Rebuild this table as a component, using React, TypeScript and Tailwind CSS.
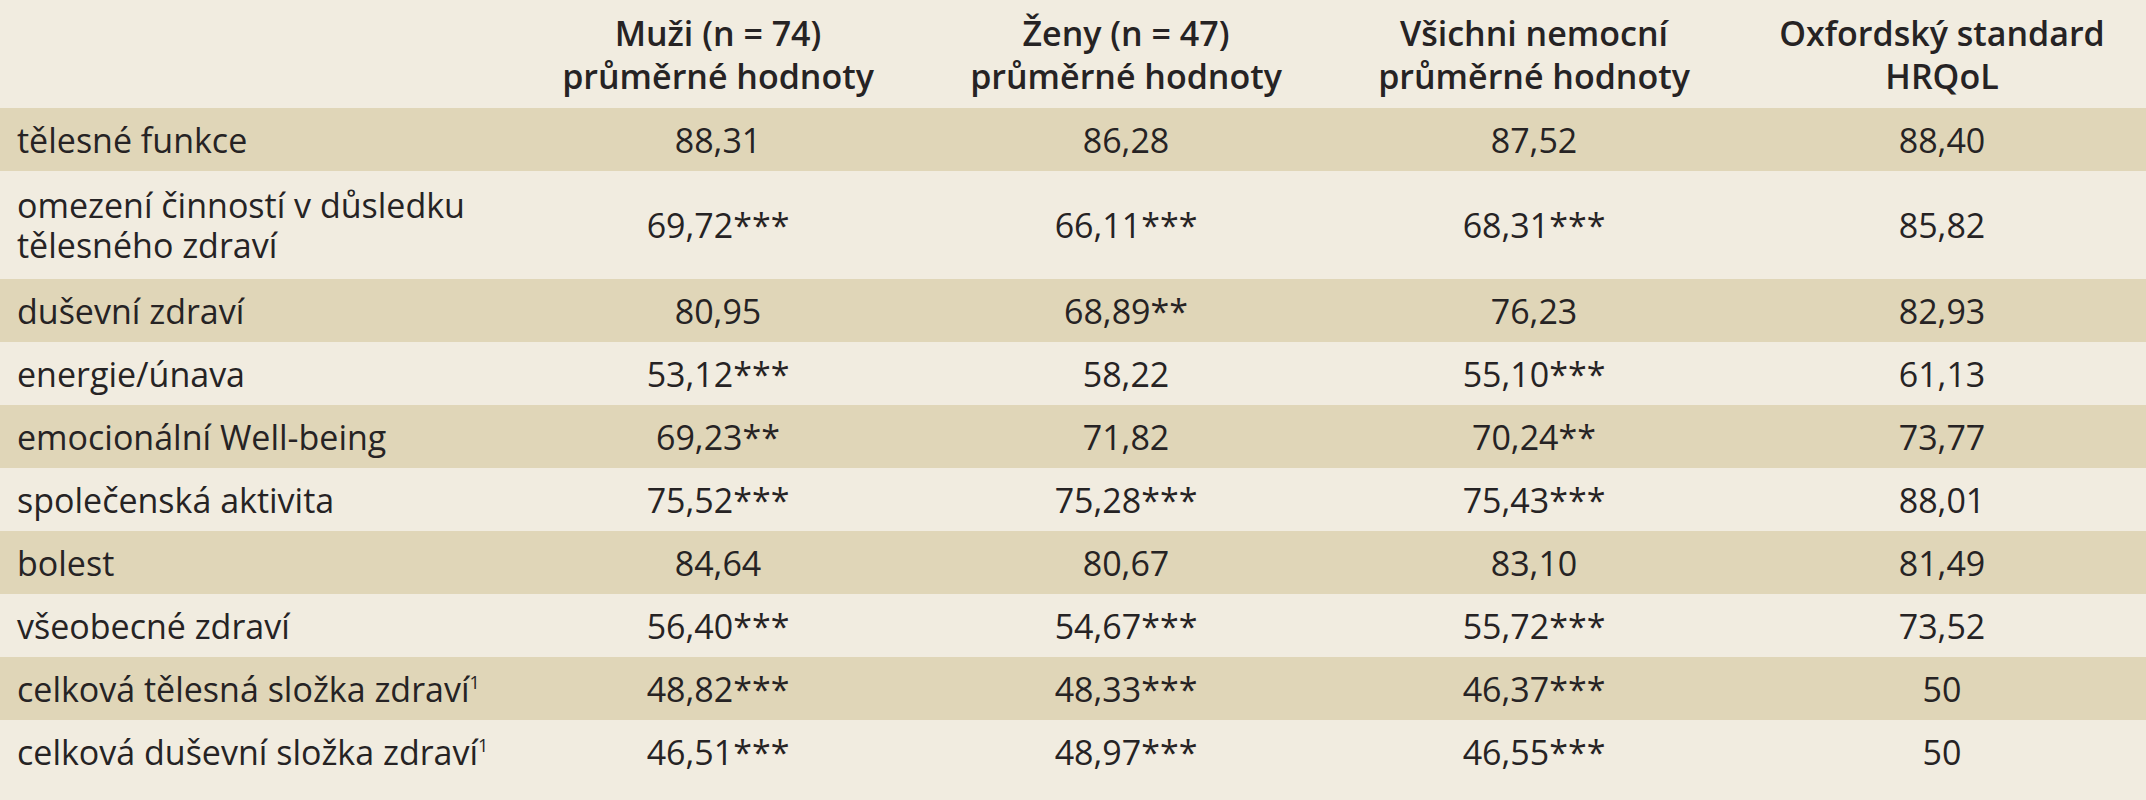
import React from "react";

type Row = {
  label: React.ReactNode;
  values: string[];
  tall?: boolean;
};

const rows: Row[] = [
  { label: "tělesné funkce", values: ["88,31", "86,28", "87,52", "88,40"] },
  {
    label: (
      <>
        omezení činností v důsledku
        <br />
        tělesného zdraví
      </>
    ),
    values: ["69,72***", "66,11***", "68,31***", "85,82"],
    tall: true,
  },
  { label: "duševní zdraví", values: ["80,95", "68,89**", "76,23", "82,93"] },
  { label: "energie/únava", values: ["53,12***", "58,22", "55,10***", "61,13"] },
  { label: "emocionální Well-being", values: ["69,23**", "71,82", "70,24**", "73,77"] },
  { label: "společenská aktivita", values: ["75,52***", "75,28***", "75,43***", "88,01"] },
  { label: "bolest", values: ["84,64", "80,67", "83,10", "81,49"] },
  { label: "všeobecné zdraví", values: ["56,40***", "54,67***", "55,72***", "73,52"] },
  {
    label: (
      <>
        celková tělesná složka zdraví<sup className="text-[18px] -top-[0.7em]">1</sup>
      </>
    ),
    values: ["48,82***", "48,33***", "46,37***", "50"],
  },
  {
    label: (
      <>
        celková duševní složka zdraví<sup className="text-[18px] -top-[0.7em]">1</sup>
      </>
    ),
    values: ["46,51***", "48,97***", "46,55***", "50"],
  },
];

const headers = [
  ["Muži (n = 74)", "průměrné hodnoty"],
  ["Ženy (n = 47)", "průměrné hodnoty"],
  ["Všichni nemocní", "průměrné hodnoty"],
  ["Oxfordský standard", "HRQoL"],
];

export default function App() {
  return (
    <div className="w-[2146px] h-[800px] overflow-hidden bg-[#f1ece0] text-[#262324] font-['Open_Sans','Noto_Sans',sans-serif]">
      <table className="w-full table-fixed border-collapse">
        <colgroup>
          <col className="w-[514px]" />
          <col className="w-[408px]" />
          <col className="w-[408px]" />
          <col className="w-[408px]" />
          <col className="w-[408px]" />
        </colgroup>
        <thead>
          <tr>
            <th className="h-[108px]" />
            {headers.map(([a, b]) => (
              <th
                key={a}
                className="h-[108px] align-middle text-center font-semibold text-[34px] leading-[43px] pt-[2px]"
              >
                {a}
                <br />
                {b}
              </th>
            ))}
          </tr>
        </thead>
        <tbody>
          {rows.map((r, i) => (
            <tr key={i} className={i % 2 === 0 ? "bg-[#e0d6b8]" : "bg-[#f1ece0]"}>
              <td
                className={`pl-[17px] align-middle text-[34px] ${
                  r.tall ? "h-[108px] leading-[40px]" : "h-[63px] leading-[40px]"
                }`}
              >
                {r.label}
              </td>
              {r.values.map((v, j) => (
                <td key={j} className="text-center align-middle text-[34px] leading-[40px]">
                  {v}
                </td>
              ))}
            </tr>
          ))}
        </tbody>
      </table>
    </div>
  );
}
